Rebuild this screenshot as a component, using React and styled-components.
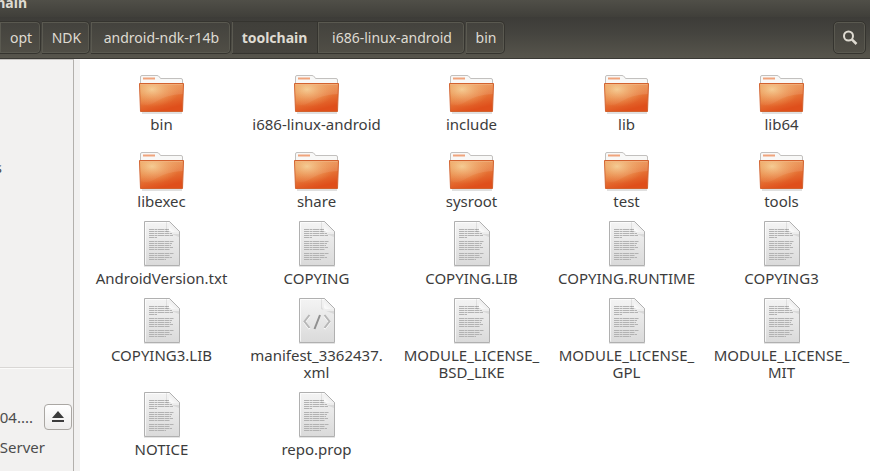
import React from "react";
import styled, { createGlobalStyle, css } from "styled-components";

const GlobalStyle = createGlobalStyle`
  * { box-sizing: border-box; }
  body {
    margin: 0;
    background: #fff;
    color: #3c3c3c;
    font-family: "Noto Sans", "Open Sans", sans-serif;
    font-size: 15px;
    line-height: 17px;
  }
  button { font: inherit; cursor: pointer; }
`;

const Window = styled.div`
  display: flex;
  flex-direction: column;
  height: 100vh;
  overflow: hidden;
`;

const TitleBar = styled.header`
  display: flex;
  align-items: flex-end;
  flex: 0 0 17px;
  overflow: hidden;
  padding-bottom: 6px;
  background: linear-gradient(#504f48, #403f3a);
`;

const Title = styled.h1`
  display: flex;
  justify-content: flex-end;
  width: 27px;
  margin: 0;
  color: #dfdbd2;
  font-size: 14px;
  font-weight: 700;
  line-height: 17px;
`;

const Toolbar = styled.div`
  display: flex;
  justify-content: space-between;
  flex: 0 0 42px;
  padding: 4px 4px 4px 0;
  border-bottom: 1px solid #3a3935;
  background: linear-gradient(#3d3c38, #45443f 40%, #57554c);
  font-size: 14px;
`;

const Breadcrumb = styled.nav`
  display: flex;
  gap: 1px;
`;

const toolbarButton = css`
  height: 33px;
  padding: 0;
  border: 1px solid #35342f;
  color: #dfdbd2;
  background: linear-gradient(#43423d, #504e46);
  box-shadow: inset 0 0 0 1px #5a5950;
`;

const Crumb = styled.button`
  ${toolbarButton}
  width: ${({ $width }) => $width}px;
  padding-left: 2px;
  border-left: 0;
  border-radius: 0 5px 5px 0;
  white-space: nowrap;
  ${({ $current }) =>
    $current &&
    css`
      border-radius: 0;
      margin-right: -1px;
      padding-left: 0;
      background: linear-gradient(#403f3a, #46443e);
      box-shadow: inset 1px 0 #5a5950;
      font-weight: 700;
    `}
`;

const SearchButton = styled.button`
  ${toolbarButton}
  display: grid;
  place-items: center;
  width: 33px;
  border-radius: 5px;
`;

const Body = styled.div`
  display: flex;
  flex: 1;
  min-height: 0;
`;

const Sidebar = styled.aside`
  display: flex;
  flex-direction: column;
  flex: 0 0 74px;
  overflow: hidden;
  padding-bottom: 9px;
  border-top: 1px solid #c6c4c1;
  border-right: 1px solid #b3b0ac;
  background: #f2f1f0;
  color: #4c4c4c;
`;

const SidebarGroup = styled.section`
  flex: ${({ $grow }) => ($grow ? "1" : "0 0 auto")};
  padding-top: ${({ $grow }) => ($grow ? 92 : 34)}px;
  border-top: ${({ $grow }) => ($grow ? "0" : "1px solid #d9d7d5")};
  box-shadow: ${({ $grow }) => ($grow ? "none" : "inset 0 1px #fbfbfa")};
`;

const Place = styled.div`
  display: flex;
  align-items: center;
  justify-content: space-between;
  height: 30px;
  padding-right: 1px;
  white-space: nowrap;
`;

const PlaceName = styled.span`
  display: flex;
  justify-content: flex-end;
  width: ${({ $width }) => $width}px;
`;

const EjectButton = styled.button`
  display: grid;
  place-items: center;
  width: 28px;
  height: 26px;
  padding: 0;
  border: 1px solid #aaa7a3;
  border-radius: 4px;
  background: linear-gradient(#ffffff, #eeedec);
  color: #3c3c3c;
`;

const Gutter = styled.div`
  flex: 0 0 6px;
  background: #f2f1f0;
`;

const Files = styled.main`
  display: grid;
  grid-template-columns: repeat(auto-fill, 155px);
  align-content: start;
  row-gap: 10px;
  flex: 1;
  min-width: 0;
  padding: 7px 0 0 4px;
  background: #fff;
`;

const File = styled.figure`
  display: flex;
  flex-direction: column;
  align-items: center;
  gap: 2px;
  margin: 0;
`;

const FileName = styled.figcaption`
  text-align: center;
  white-space: pre;
`;

const Icon = styled.svg`
  display: block;
`;

function FolderIcon({ id }) {
  return (
    <Icon width="48" height="48" viewBox="-1 0 48 48" aria-hidden="true">
      <defs>
        <linearGradient id={`${id}-body`} x1="0" y1="0" x2="0.4" y2="1">
          <stop offset="0" stopColor="#eda562" />
          <stop offset="0.5" stopColor="#e8803f" />
          <stop offset="1" stopColor="#df4f1b" />
        </linearGradient>
        <radialGradient id={`${id}-glow`} cx="0.28" cy="0.2" r="0.65">
          <stop offset="0" stopColor="#f6d39a" stopOpacity="0.85" />
          <stop offset="1" stopColor="#f0a05c" stopOpacity="0" />
        </radialGradient>
        <linearGradient id={`${id}-shine`} x1="0" y1="0" x2="1" y2="0">
          <stop offset="0" stopColor="#fff" stopOpacity="0.02" />
          <stop offset="1" stopColor="#fff" stopOpacity="0.12" />
        </linearGradient>
      </defs>
      <path d="M3 47H43" stroke="#000" strokeOpacity="0.12" strokeWidth="2" />
      <path d="M1.5 19V11q0-1.500 1.500-1.500H18q1.500 0 2.500 1.500l1 1.500H42q1.500 0 1.500 1.500v5Z" fill="#f8f8f7" stroke="#c2c0be" />
      <path d="M4 12.500H16" stroke="#f0a47c" strokeWidth="2" />
      <path d="M.5 17.500H44.500L43.500 45.500H1.500Z" fill={`url(#${id}-body)`} stroke="#d2622f" />
      <path d="M1 18H44L43 45H2Z" fill={`url(#${id}-glow)`} />
      <path d="M1 18H44L43.600 28Q27 29 18 35T1.600 38Z" fill={`url(#${id}-shine)`} />
      <path d="M1.500 18.500H43.500" stroke="#f3b586" strokeOpacity="0.6" />
    </Icon>
  );
}

const TEXT_LINES = [
  [9, 25], [11, 25], [13, 23], [15, 24], [17, 8],
  [21, 25], [23, 23], [25, 22], [27, 24], [29, 21],
  [33, 25], [35, 21], [37, 23], [39, 17],
];

function DocumentIcon({ id, markup }) {
  return (
    <Icon width="48" height="48" viewBox="0 0 48 48" aria-hidden="true">
      <defs>
        <linearGradient id={`${id}-page`} x1="0" y1="0" x2="0" y2="1">
          <stop offset="0" stopColor="#f4f4f4" />
          <stop offset="1" stopColor="#dadada" />
        </linearGradient>
        <linearGradient id={`${id}-fold`} x1="0" y1="1" x2="1" y2="0">
          <stop offset="0" stopColor="#ffffff" />
          <stop offset="0.5" stopColor="#eeeeee" />
          <stop offset="1" stopColor="#b5b5b5" />
        </linearGradient>
      </defs>
      <path d="M6 46.500H42" stroke="#000" strokeOpacity="0.1" />
      <path d="M6.500 1.500H31.500L41.500 11.500V45.500H6.500Z" fill={`url(#${id}-page)`} stroke="#b0b0b0" />
      <path d="M7.500 44.500V2.500H31" fill="none" stroke="#fff" strokeOpacity="0.7" />
      {markup ? (
        <g fill="none" strokeWidth="2">
          <path d="M16.500 19L11.500 25.500L16.500 32M31.500 19L36.500 25.500L31.500 32" stroke="#fff" />
          <path d="M16.500 18L11.500 24.500L16.500 31M31.500 18L36.500 24.500L31.500 31" stroke="#b7b7b7" />
          <path d="M27 18L21.500 32" stroke="#8f8f8f" />
        </g>
      ) : (
        <g stroke="#b2b2b2" strokeDasharray="5 0.5 3 0.5 6 0.5">
          {TEXT_LINES.map(([y, length]) => (
            <path key={y} d={`M11 ${y + 0.5}h${length}`} />
          ))}
        </g>
      )}
      <path d="M29 2V10Q30 14 34 14H41V17L28 12V2Z" fill="#000" fillOpacity="0.08" />
      <path d="M31 2V9.500Q31 12 33.500 12H41.500Z" fill={`url(#${id}-fold)`} />
      <path d="M31.500 1.500L41.500 11.500" stroke="#b0b0b0" />
    </Icon>
  );
}

const CRUMBS = [
  { name: "opt", width: 41 },
  { name: "NDK", width: 48 },
  { name: "android-ndk-r14b", width: 140 },
  { name: "toolchain", width: 86, current: true },
  { name: "i686-linux-android", width: 147 },
  { name: "bin", width: 39 },
];

const FILES = [
  ["bin", "folder"],
  ["i686-linux-android", "folder"],
  ["include", "folder"],
  ["lib", "folder"],
  ["lib64", "folder"],
  ["libexec", "folder"],
  ["share", "folder"],
  ["sysroot", "folder"],
  ["test", "folder"],
  ["tools", "folder"],
  ["AndroidVersion.txt", "text"],
  ["COPYING", "text"],
  ["COPYING.LIB", "text"],
  ["COPYING.RUNTIME", "text"],
  ["COPYING3", "text"],
  ["COPYING3.LIB", "text"],
  ["manifest_3362437.\nxml", "markup"],
  ["MODULE_LICENSE_\nBSD_LIKE", "text"],
  ["MODULE_LICENSE_\nGPL", "text"],
  ["MODULE_LICENSE_\nMIT", "text"],
  ["NOTICE", "text"],
  ["repo.prop", "text"],
];

export default function App() {
  return (
    <Window>
      <GlobalStyle />
      <TitleBar>
        <Title>hain</Title>
      </TitleBar>
      <Toolbar>
        <Breadcrumb aria-label="Path">
          {CRUMBS.map(({ name, width, current }) => (
            <Crumb key={name} type="button" $width={width} $current={current} aria-current={current ? "page" : undefined}>
              {name}
            </Crumb>
          ))}
        </Breadcrumb>
        <SearchButton type="button" aria-label="Search">
          <Icon width="16" height="16" viewBox="0 0 16 16" aria-hidden="true">
            <circle cx="6.500" cy="6" r="4.500" fill="none" stroke="#dfdbd2" strokeWidth="2" />
            <path d="M9.800 9.300L14.500 14" stroke="#dfdbd2" strokeWidth="2.500" />
          </Icon>
        </SearchButton>
      </Toolbar>
      <Body>
        <Sidebar>
          <SidebarGroup $grow>
            <Place>
              <PlaceName $width={2}>s</PlaceName>
            </Place>
          </SidebarGroup>
          <SidebarGroup>
            <Place>
              <PlaceName $width={33}>04....</PlaceName>
              <EjectButton type="button" aria-label="Eject">
                <Icon width="14" height="14" viewBox="0 0 14 14" aria-hidden="true">
                  <path d="M7 1L13 8H1ZM1 10H13V12H1Z" fill="currentColor" />
                </Icon>
              </EjectButton>
            </Place>
            <Place>
              <PlaceName $width={45}>Server</PlaceName>
            </Place>
          </SidebarGroup>
        </Sidebar>
        <Gutter />
        <Files>
          {FILES.map(([name, kind], index) => (
            <File key={name}>
              {kind === "folder" ? (
                <FolderIcon id={`file-${index}`} />
              ) : (
                <DocumentIcon id={`file-${index}`} markup={kind === "markup"} />
              )}
              <FileName>{name}</FileName>
            </File>
          ))}
        </Files>
      </Body>
    </Window>
  );
}
